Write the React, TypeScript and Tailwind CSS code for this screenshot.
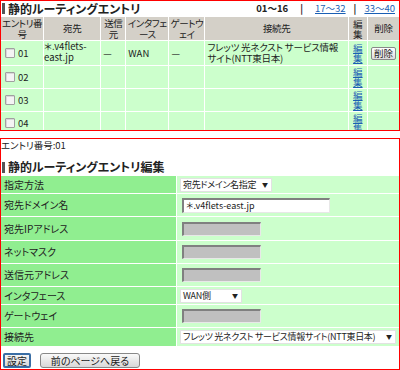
import React from 'react';

const font = "font-['Noto_Sans_CJK_JP',sans-serif] [font-feature-settings:'palt']";

const Check = () => (
  <span className="inline-block w-[10px] h-[10px] border border-[#a0a0a0] bg-[#f4f4f4] rounded-[1px] shadow-[inset_1px_1px_0_#d8d8d8]" />
);

const EditLink = () => (
  <a className="text-[#1a5fb4] underline leading-[10px] block w-[10px] mx-auto text-[9.5px]">編集</a>
);

const Select = ({ label, width }: { label: string; width: string }) => (
  <div className={`${width} h-[14px] bg-white border border-[#e2e2e2] flex items-center justify-between pl-[2px] pr-[3px] text-[9px] leading-[12px]`}>
    <span className="whitespace-nowrap tracking-[-0.3px]">{label}</span>
    <span className="text-[6px] ml-1">▼</span>
  </div>
);

const Disabled = () => (
  <div className="w-[79px] h-[14px] bg-[#c0c0c0] border-t-2 border-l-2 border-[#808080] border-r border-b border-r-[#e8e8e8] border-b-[#e8e8e8]" />
);

const rows = ['01', '02', '03', '04'];

const formRows: { label: string; h: string; field: React.ReactNode }[] = [
  { label: '指定方法', h: 'h-[17px]', field: <Select label="宛先ドメイン名指定" width="w-[92px]" /> },
  {
    label: '宛先ドメイン名',
    h: 'h-[22px]',
    field: (
      <div className="w-[148px] h-[15px] bg-white border-t-2 border-l-2 border-[#808080] border-r border-b border-r-[#e8e8e8] border-b-[#e8e8e8] text-[9px] leading-none flex items-center pl-[2px] ml-[2px]">
        ＊.v4flets-east.jp
      </div>
    ),
  },
  { label: '宛先IPアドレス', h: 'h-[23px]', field: <div className="ml-[2px]"><Disabled /></div> },
  { label: 'ネットマスク', h: 'h-[22px]', field: <div className="ml-[2px]"><Disabled /></div> },
  { label: '送信元アドレス', h: 'h-[22px]', field: <div className="ml-[2px]"><Disabled /></div> },
  { label: 'インタフェース', h: 'h-[17px]', field: <Select label="WAN側" width="w-[62px]" /> },
  { label: 'ゲートウェイ', h: 'h-[22px]', field: <div className="ml-[2px]"><Disabled /></div> },
  { label: '接続先', h: 'h-[18px]', field: <Select label="フレッツ 光ネクスト サービス情報サイト(NTT東日本)" width="w-[216px]" /> },
];

const th = 'font-normal whitespace-nowrap overflow-hidden tracking-[-0.4px]';

export default function App() {
  return (
    <div className={`w-[400px] h-[370px] bg-white text-[#222] text-[9.5px] ${font}`}>
      {/* list box */}
      <div className="border border-[#ff0000] h-[131px] overflow-hidden">
        <div className="flex items-center justify-between h-[15px]">
          <div className="flex items-center">
            <span className="w-[3px] h-[11px] bg-[#555] ml-[1px] mr-[3px]" />
            <span className="text-[12px] font-bold leading-none">静的ルーティングエントリ</span>
          </div>
          <div className="flex items-center text-[9.5px] font-bold leading-none mr-[4px]">
            <span>01～16</span>
            <span className="mx-[12px]">|</span>
            <a className="text-[#1a5fb4] underline font-normal">17～32</a>
            <span className="mx-[8px]">|</span>
            <a className="text-[#1a5fb4] underline font-normal">33～40</a>
          </div>
        </div>
        <table className="table-fixed border-separate border-spacing-[1px] w-[400px] -ml-px leading-[11px]">
          <colgroup>
            <col className="w-[42px]" />
            <col className="w-[56px]" />
            <col className="w-[24px]" />
            <col className="w-[42px]" />
            <col className="w-[35px]" />
            <col className="w-[142px]" />
            <col className="w-[18px]" />
            <col className="w-[31px]" />
          </colgroup>
          <thead>
            <tr className="bg-[#d4d0c8] h-[23px] text-center">
              <th className={th}>エントリ番<br />号</th>
              <th className={th}>宛先</th>
              <th className={th}>送信<br />元</th>
              <th className={th}>インタフェ<br />ース</th>
              <th className={th}>ゲートウ<br />ェイ</th>
              <th className={th}>接続先</th>
              <th className="font-normal">
                <span className="block w-[10px] mx-auto leading-[10px]">編集</span>
              </th>
              <th className={th}>削除</th>
            </tr>
          </thead>
          <tbody>
            {rows.map((n, i) => (
              <tr key={n} className={`bg-[#ccffcc] ${i === 0 ? 'h-[24px]' : 'h-[22px]'}`}>
                <td className="pl-[4px] align-middle">
                  <div className="flex items-end gap-[3px]">
                    <Check />
                    <span className="leading-none">{n}</span>
                  </div>
                </td>
                <td className="align-top">{i === 0 ? '＊.v4flets-east.jp' : ''}</td>
                <td className="pl-[2px]">{i === 0 ? '—' : ''}</td>
                <td className="pl-[2px]">{i === 0 ? 'WAN' : ''}</td>
                <td className="pl-[2px]">{i === 0 ? '—' : ''}</td>
                <td className="pl-[2px] whitespace-nowrap overflow-hidden tracking-[-0.2px]">
                  {i === 0 ? (
                    <>
                      フレッツ 光ネクスト サービス情報
                      <br />
                      サイト(NTT東日本)
                    </>
                  ) : (
                    ''
                  )}
                </td>
                <td className="text-center">
                  <EditLink />
                </td>
                <td className="text-center">
                  {i === 0 && (
                    <span className="inline-block px-[2px] h-[13px] leading-[11px] border border-[#888] rounded-[2px] bg-gradient-to-b from-white to-[#dcdcdc]">
                      削除
                    </span>
                  )}
                </td>
              </tr>
            ))}
          </tbody>
        </table>
      </div>

      {/* edit box */}
      <div className="border border-[#ff0000] mt-[7px] h-[232px] flex flex-col">
        <div className="h-[12px] flex items-center leading-none mt-[1px]">エントリ番号:01</div>
        <div className="flex items-center mt-[8px] h-[14px]">
          <span className="w-[3px] h-[11px] bg-[#555] ml-[1px] mr-[3px]" />
          <span className="text-[12px] font-bold leading-none">静的ルーティングエントリ編集</span>
        </div>
        <table className="table-fixed border-separate border-spacing-x-px border-spacing-y-[1px] w-[400px] -ml-px mt-[1px]">
          <colgroup>
            <col className="w-[175px]" />
            <col />
          </colgroup>
          <tbody>
            {formRows.map((r) => (
              <tr key={r.label} className={r.h}>
                <td className="bg-[#90ee90] pl-[3px] text-[10px] leading-none">{r.label}</td>
                <td className="bg-[#ccffcc] pl-[3px]">{r.field}</td>
              </tr>
            ))}
          </tbody>
        </table>
        <div className="flex items-center gap-[9px] mt-[6px] ml-[2px]">
          <span className="h-[15px] px-[2px] flex items-center leading-none border-2 border-[#3a6ea5] rounded-[2px] bg-gradient-to-b from-[#f4f4f4] to-[#d8d8d8] text-[10px]">
            設定
          </span>
          <span className="h-[15px] w-[100px] flex items-center justify-center leading-none border border-[#888] rounded-[3px] bg-gradient-to-b from-[#fafafa] to-[#d8d8d8] text-[10px]">
            前のページへ戻る
          </span>
        </div>
      </div>
    </div>
  );
}
